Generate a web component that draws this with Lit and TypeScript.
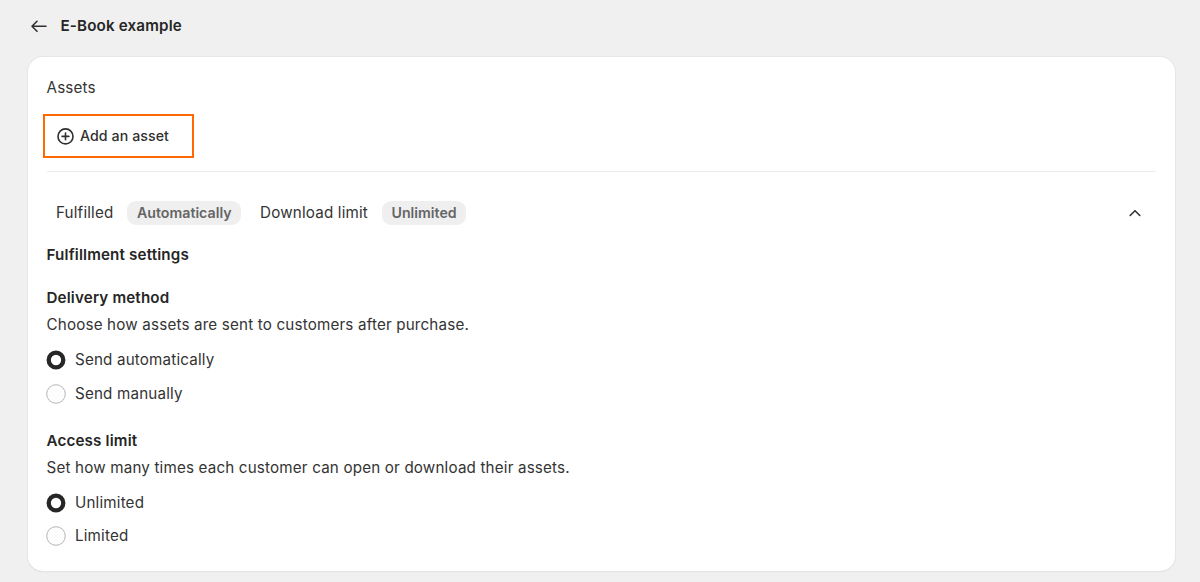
import { LitElement, html, css } from "lit";
import { customElement, property } from "lit/decorators.js";

@customElement("radio-option")
class RadioOption extends LitElement {
  @property() label = "";
  @property({ type: Boolean }) checked = false;
  static styles = css`
    :host { display: flex; align-items: center; height: 20px; gap: 9px; }
    svg { display: block; width: 20px; height: 20px; margin-left: -0.5px; flex: none; }
    .off { fill: #fdfdfd; stroke: #b5b5b5; stroke-width: 1; }
    .on { fill: #fff; stroke: #272727; stroke-width: 4.3; }
  `;
  render() {
    return html`
      <svg viewBox="0 0 20 20">
        <circle class=${this.checked ? "on" : "off"} cx="10" cy="10" r=${this.checked ? 7.3 : 9.3}></circle>
      </svg>
      <span>${this.label}</span>`;
  }
}

@customElement("app-root")
class AppRoot extends LitElement {
  static styles = css`
    :host { display: block; box-sizing: border-box; height: 582px; overflow: hidden; background: #f0f0f0; color: #343434; font: 400 15.2px/20px Inter, sans-serif; font-optical-sizing: none; letter-spacing: 0.17px; padding: 16px 25px 0 28px; white-space: nowrap; }
    svg { display: block; fill: none; stroke: #303030; stroke-width: 1.6; stroke-linecap: round; stroke-linejoin: round; flex: none; }
    header { display: flex; align-items: center; gap: 13.5px; height: 20px; padding-left: 3px; }
    h1, h2, h3, p { margin: 0; font: inherit; }
    h1, h2, h3 { font-weight: 560; color: #262626; letter-spacing: 0.15px; }
    .card { box-sizing: border-box; height: 514.5px; margin-top: 20.5px; padding: 21.5px 19px 0 18.5px; border-radius: 15px; background: #fff; box-shadow: 0 0 0 1px #e6e6e6, 0 1px 1px #c8c8c8; }
    .add { box-sizing: border-box; display: flex; align-items: center; gap: 6px; width: 151px; height: 44px; margin: 16px 0 13px -3.5px; padding: 0 0 0 12px; border: 2px solid #ff6900; background: #fff; color: #303030; font: 540 14.2px/20px Inter, sans-serif; font-optical-sizing: none; letter-spacing: 0.07px; }
    .summary { display: flex; align-items: center; height: 24px; border-top: 1px solid #ebebeb; padding: 29px 15px 0 9.5px; }
    .badge { height: 24px; border-radius: 9px; background: #efefef; color: #656565; font-weight: 560; font-size: 14.2px; line-height: 24px; letter-spacing: 0; padding: 0 9.5px; margin: 0 19px 0 14px; }
    .chev { margin-left: auto; }
    .settings { margin-top: 20px; }
    .group { margin-top: 23px; }
    .group + .group { margin-top: 27px; }
    .help { margin-top: 7px; }
    radio-option { margin-top: 13px; }
    .group:nth-of-type(1) radio-option + radio-option { margin-top: 14px; }
    .help + radio-option { margin-top: 15px; }
  `;
  render() {
    return html`
      <header>
        <svg width="16" height="14" viewBox="0 0 16 14"><path d="M15 7.3H1M6 2.3L1 7.3l5 5"/></svg>
        <h1>E-Book example</h1>
      </header>
      <main class="card">
        <p>Assets</p>
        <button class="add">
          <svg width="17" height="17" viewBox="0 0 17 17"><circle cx="8.5" cy="8.4" r="7.5"/><path d="M8.5 5v6.8M5.1 8.4h6.8"/></svg>
          <span>Add an asset</span>
        </button>
        <div class="summary">
          <span>Fulfilled</span><span class="badge">Automatically</span>
          <span>Download limit</span><span class="badge">Unlimited</span>
          <svg class="chev" width="12" height="8" viewBox="0 0 12 8"><path d="M1.2 6.5L6 1.7l4.8 4.8"/></svg>
        </div>
        <h2 class="settings">Fulfillment settings</h2>
        <section class="group">
          <h3>Delivery method</h3>
          <p class="help">Choose how assets are sent to customers after purchase.</p>
          <radio-option label="Send automatically" checked></radio-option>
          <radio-option label="Send manually"></radio-option>
        </section>
        <section class="group">
          <h3>Access limit</h3>
          <p class="help">Set how many times each customer can open or download their assets.</p>
          <radio-option label="Unlimited" checked></radio-option>
          <radio-option label="Limited"></radio-option>
        </section>
      </main>`;
  }
}
